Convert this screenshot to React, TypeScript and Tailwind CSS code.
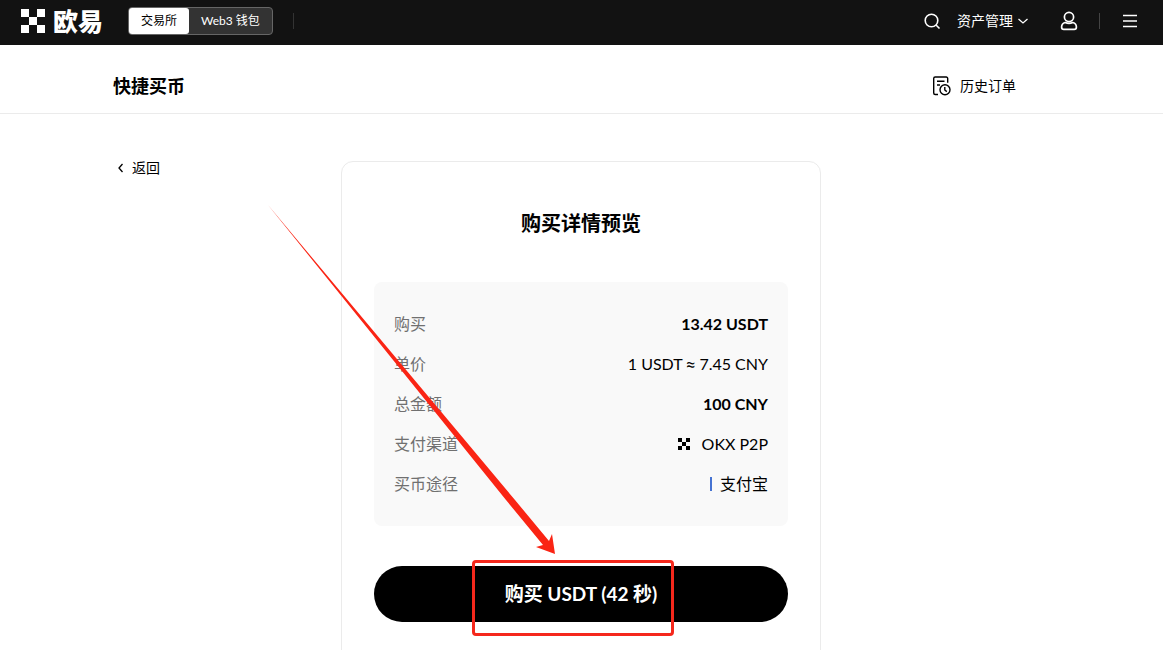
import React from "react";

const Mark = ({ className }: { className: string }) => (
  <svg viewBox="0 0 3 3" fill="currentColor" shapeRendering="crispEdges" aria-hidden="true" className={className}>
    <path d="M0 0h1v1H0zM2 0h1v1H2zM1 1h1v1H1zM0 2h1v1H0zM2 2h1v1H2z" />
  </svg>
);

const Header = () => {
  return (
    <header className="flex h-[45px] shrink-0 items-center justify-between bg-[#121212] pr-[25px] pb-[3px] pl-[21px] text-white">
      <div className="flex items-center">
        <a href="#home" className="flex items-center gap-2">
          <Mark className="size-6" />
          <span className="text-[25px] leading-6 font-black">欧易</span>
        </a>
        <div className="ml-[25px] flex h-7 rounded-sm border border-[#666] bg-[#333] text-xs">
          <button type="button" className="rounded-[3px] bg-white px-3 text-black">
            交易所
          </button>
          <button type="button" className="px-3">
            Web3 钱包
          </button>
        </div>
        <div className="ml-5 h-4 w-px bg-[#333]" />
      </div>
      <div className="flex items-center">
        <button type="button" aria-label="搜索">
          <svg viewBox="0 0 18 18" fill="none" stroke="currentColor" strokeWidth="1.6" className="size-[18px]">
            <circle cx="8.5" cy="8.5" r="6.3" />
            <path d="M13 13l3.5 3.5" />
          </svg>
        </button>
        <button type="button" className="ml-4 flex items-center gap-1 text-sm">
          资产管理
          <svg viewBox="0 0 12 12" fill="none" stroke="currentColor" strokeWidth="1.3" className="size-3">
            <path d="M1.5 4L6 8l4.500-4" />
          </svg>
        </button>
        <button type="button" aria-label="账户" className="ml-[30px]">
          <svg viewBox="0 0 20 20" fill="none" stroke="currentColor" strokeWidth="1.7" className="size-5">
            <circle cx="10" cy="6" r="4.600" />
            <path d="M6.200 11.500C3.800 12.200 2.600 13.700 2.600 16c0 1.600.8 2.400 2.200 2.400h10.400c1.400 0 2.200-.8 2.200-2.400 0-2.300-1.200-3.800-3.600-4.500-2.200.9-5.400.9-7.600 0z" />
          </svg>
        </button>
        <div className="ml-5 h-4 w-px bg-[#444]" />
        <button type="button" aria-label="菜单" className="ml-[22px]">
          <svg viewBox="0 0 16 16" fill="none" stroke="currentColor" strokeWidth="1.400" className="size-4">
            <path d="M1 2.500h14M1 8h14M1 13.500h14" />
          </svg>
        </button>
      </div>
    </header>
  );
};

const Details = () => {
  return (
    <dl className="rounded-lg bg-[#f9f9f9] px-5 py-[22px] text-base">
      <div className="flex h-10 items-center justify-between">
        <dt className="text-[#707070]">购买</dt>
        <dd className="font-bold">13.42 USDT</dd>
      </div>
      <div className="flex h-10 items-center justify-between">
        <dt className="text-[#707070]">单价</dt>
        <dd>
          1 USDT <span className="font-[Roboto,sans-serif]">≈</span> 7.45 CNY
        </dd>
      </div>
      <div className="flex h-10 items-center justify-between">
        <dt className="text-[#707070]">总金额</dt>
        <dd className="font-bold">100 CNY</dd>
      </div>
      <div className="flex h-10 items-center justify-between">
        <dt className="text-[#707070]">支付渠道</dt>
        <dd className="flex items-center gap-3">
          <Mark className="size-3" />
          OKX P2P
        </dd>
      </div>
      <div className="flex h-10 items-center justify-between">
        <dt className="text-[#707070]">买币途径</dt>
        <dd className="flex items-center gap-2">
          <span className="h-[14px] w-0.5 bg-[#4573d2]" />
          支付宝
        </dd>
      </div>
    </dl>
  );
};

const App = () => {
  return (
    <div className="flex h-screen flex-col overflow-hidden bg-white font-[Lato,'Noto_Sans_CJK_SC',sans-serif] text-black">
      <Header />
      <div className="flex h-[69px] shrink-0 items-center justify-between border-b border-[#ebebeb] pt-4 pr-[147px] pb-[2px] pl-[113px]">
        <h1 className="text-lg font-bold">快捷买币</h1>
        <a href="#orders" className="flex items-center gap-2 text-sm">
          <svg viewBox="0 0 20 20" fill="none" stroke="currentColor" strokeWidth="1.400" className="size-5">
            <path d="M6 18.500H3.200a1.500 1.500 0 0 1-1.500-1.500V2.500A1.500 1.500 0 0 1 3.200 1h11a1.500 1.500 0 0 1 1.500 1.500v4.300M5 5.200h7.500M5 9h3" />
            <circle cx="13" cy="13.800" r="5" />
            <path d="M12.800 11v3l2 1.600" />
          </svg>
          历史订单
        </a>
      </div>
      <main className="grid grid-cols-[1fr_480px_1fr] pt-[47px] pr-px">
        <div className="pl-[116px]">
          <a href="#back" className="flex w-fit items-center gap-1.5 text-sm leading-[14px]">
            <svg viewBox="0 0 10 10" fill="none" stroke="currentColor" strokeWidth="1.300" className="size-[10px]">
              <path d="M6.500 1L3 5l3.500 4" />
            </svg>
            返回
          </a>
        </div>
        <section className="relative rounded-xl border border-[#ebebeb] px-8 pt-[47px] pb-12">
          <h2 className="mb-[45px] text-center text-xl leading-7 font-bold">购买详情预览</h2>
          <Details />
          <div className="relative mt-10">
            <button type="button" className="h-14 w-full rounded-full bg-black text-[19px] font-bold text-white">
              购买 USDT (42 秒)
            </button>
            <div className="pointer-events-none absolute -top-[6px] left-[98px] h-[76px] w-[202px] rounded-sm border-3 border-[#f5281c]" />
          </div>
          <svg
            viewBox="268 205 290 350"
            fill="#fa2414"
            aria-hidden="true"
            className="pointer-events-none absolute top-[43px] -left-[74px] h-[350px] w-[290px]"
          >
            <path d="M268 205L515 500L549 541L552 534L555 554L536 547L543 545L506 500z" />
          </svg>
        </section>
      </main>
    </div>
  );
};

export default App;
